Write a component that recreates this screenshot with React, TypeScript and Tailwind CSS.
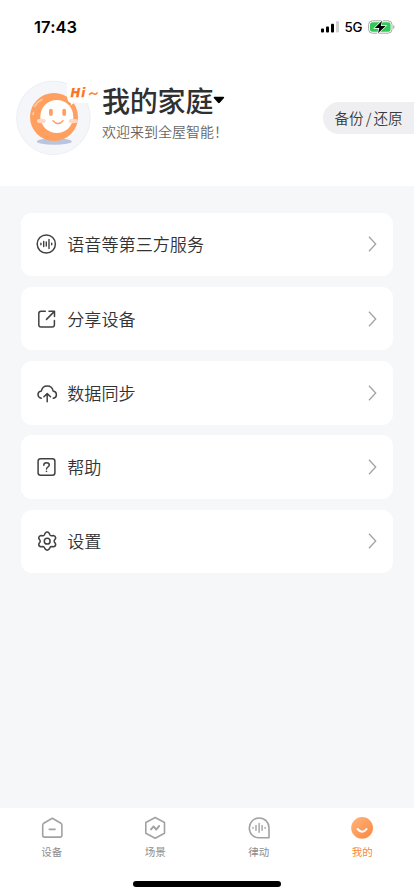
import type { ReactNode } from "react";

function Avatar() {
  return (
    <svg width="84" height="76" viewBox="16 80 84 76" className="shrink-0">
      <circle cx="53.4" cy="117.8" r="36.8" fill="#f4f6fa" stroke="#e9edf4" strokeWidth="0.9" />
      <ellipse cx="54.3" cy="141.5" rx="17.5" ry="3.2" fill="#b9c4de" />
      <circle cx="54" cy="117" r="24" fill="#ffa060" />
      <path d="M67 80H100V103H74L69.5 106.2L70 102.5Q67 101.5 67 95Z" fill="#fff" />
      <path d="M68 102.6L71.2 103.4L70.2 106.2" fill="#ff9147" />
      <circle cx="56.8" cy="116.5" r="16.5" fill="#fff" />
      <ellipse cx="41.3" cy="121" rx="4.5" ry="2.2" fill="#ffd9c4" />
      <ellipse cx="73.3" cy="121" rx="4.5" ry="2.2" fill="#ffd9c4" />
      <rect x="49" y="108.7" width="3.8" height="7.3" rx="1.9" fill="#ff9f68" />
      <rect x="62.3" y="108.7" width="3.8" height="7.3" rx="1.9" fill="#ff9f68" />
      <path d="M53 120.8Q58.2 126.4 63 120.8" fill="none" stroke="#ff9f68" strokeWidth="1.5" strokeLinecap="round" />
      <path d="M34.8 106.2Q37 102 42 99.5" fill="none" stroke="#ffc79f" strokeWidth="1.8" strokeLinecap="round" />
      <path d="M33 114.5L33.5 112.5" stroke="#ffc79f" strokeWidth="1.6" strokeLinecap="round" />
      <text x="70.6" y="97" fontSize="11.8" fontWeight="700" fontStyle="italic" letterSpacing="0.7" fontFamily="DejaVu Sans, sans-serif" fill="#fb731a" stroke="#fb731a" strokeWidth="0.25">Hi</text>
      <path d="M89.5 94.5Q91.3 92.1 93.4 93.7Q95.4 95.1 97 93" fill="none" stroke="#f98537" strokeWidth="1.6" strokeLinecap="round" />
    </svg>
  );
}

function Status() {
  return (
    <header className="flex h-[54px] items-center justify-between pl-[34px] pr-[19px] text-black">
      <span className="font-[Inter,sans-serif] text-[16.5px] font-semibold tracking-[0.1px]">17:43</span>
      <div className="flex items-center">
        <svg width="19" height="14" viewBox="0 0 19 14">
          <rect x="0" y="8.6" width="3" height="3.8" rx="0.9" />
          <rect x="5" y="6.4" width="3" height="6" rx="0.9" />
          <rect x="10" y="3.8" width="3" height="8.6" rx="0.9" />
          <rect x="15" y="1" width="3" height="11.4" rx="0.9" fill="#d1d1d1" />
        </svg>
        <span className="ml-[5px] w-[18.5px] font-[Inter,sans-serif] text-[13.3px] font-medium leading-[16px] tracking-[-0.1px]">5G</span>
        <svg className="ml-[5px]" width="27" height="14" viewBox="0 0 27 14">
          <rect x="0.6" y="0.8" width="23.4" height="12.4" rx="3.8" fill="#fff" stroke="#a8a8a8" />
          <rect x="2" y="2.2" width="20.6" height="9.6" rx="2.5" fill="#35c759" />
          <path d="M25.2 5V9Q26.5 8.4 26.5 7T25.2 5Z" fill="#a8a8a8" />
          <path d="M14 0.8L6.8 8H11.3L10 13.2L17.6 5.9H12.8Z" fill="#000" stroke="#fff" strokeWidth="1.4" paintOrder="stroke" />
        </svg>
      </div>
    </header>
  );
}

function LineIcon({ children }: { children: ReactNode }) {
  return (
    <svg width="22" height="22" viewBox="0 0 22 22" fill="none" stroke="#414141" strokeWidth="1.5" strokeLinecap="round" strokeLinejoin="round">
      {children}
    </svg>
  );
}

const rows: { label: string; icon: ReactNode }[] = [
  {
    label: "语音等第三方服务",
    icon: (
      <LineIcon>
        <circle cx="10.3" cy="11" r="9.1" />
        <path d="M4.9 10.3V11.7M7.7 8.5V13.5M10.3 9V13M13 6.5V15.5M15.7 10.3V11.7" strokeWidth="1.4" />
      </LineIcon>
    ),
  },
  {
    label: "分享设备",
    icon: (
      <LineIcon>
        <path d="M9.3 3.3H5.1Q2.8 3.3 2.8 5.6V16.8Q2.8 19.1 5.1 19.1H16.1Q18.4 19.1 18.4 16.8V12.5M13 3.3H18.5V8.4M18.2 3.6L10.5 11.4" />
      </LineIcon>
    ),
  },
  {
    label: "数据同步",
    icon: (
      <LineIcon>
        <path d="M5.2 16.3C.7 15 1.1 9.6 5.4 9C6.5 2.2 16 2.2 17.1 9C21.3 9.7 21.7 15.2 17.3 16.3M11.2 19.8V11.9M7.9 14.8L11.2 11.6L14.5 14.8" />
      </LineIcon>
    ),
  },
  {
    label: "帮助",
    icon: (
      <LineIcon>
        <rect x="2.1" y="2.8" width="16.8" height="16.4" rx="2.5" />
        <path d="M7.8 9.2C7.8 6 13.3 6.1 13.3 9.1C13.3 10.9 10.5 11.1 10.5 13M10.5 15.3V15.4" />
      </LineIcon>
    ),
  },
  {
    label: "设置",
    icon: (
      <LineIcon>
        <path d="M9.2 3.2Q11.2 1 13.2 3.2L14.1 5.1Q14.8 6 16 5.8L17.7 5.6Q20 6.3 19.6 8.5L18.3 10.4Q17.9 11.2 18.4 12L19.6 13.8Q20 16 17.7 16.8L15.6 16.5Q14.6 16.5 14.1 17.4L13.2 19.1Q11.2 21.2 9.2 19.1L8.3 17.4Q7.7 16.5 6.7 16.5L4.7 16.8Q2.4 16 2.8 13.8L4 12Q4.5 11.2 4 10.4L2.8 8.5Q2.4 6.3 4.7 5.6L6.7 5.8Q7.7 5.9 8.2 5.1Z" />
        <circle cx="11.2" cy="11.2" r="2.9" />
      </LineIcon>
    ),
  },
];

function TabIcon({ children }: { children: ReactNode }) {
  return (
    <svg width="24" height="24" viewBox="0 0 24 24" fill="none" stroke="#a2a2a2" strokeWidth="1.6" strokeLinecap="round" strokeLinejoin="round">
      {children}
    </svg>
  );
}

const tabs: { label: string; active?: boolean; icon: ReactNode }[] = [
  {
    label: "设备",
    icon: (
      <TabIcon>
        <path d="M12.3 2.2L20.9 7.3Q21.9 8 21.9 9.2V19.3Q21.9 21.1 20.1 21.1H4.5Q2.7 21.1 2.7 19.3V9.2Q2.7 8 3.7 7.3ZM9.3 13.4H15" />
      </TabIcon>
    ),
  },
  {
    label: "场景",
    icon: (
      <TabIcon>
        <path d="M12.2 1.5L21.5 6.5V17.2L12.2 22.3L2.8 17.2V6.5Z" />
        <path d="M8 13.4L10.6 10.4L13.2 13.6L16.2 9.9" strokeWidth="1.9" />
      </TabIcon>
    ),
  },
  {
    label: "律动",
    icon: (
      <TabIcon>
        <path d="M12.2 2C18 2 22 6.4 22 12V21.8H12.2C6.5 21.8 2.3 17.5 2.3 12S6.5 2 12.2 2Z" />
        <path d="M6 11.5V12.3M9 9.5V14.3M12.1 7.4V16.3M15.1 9.5V14.3M18.1 11.5V12.3" strokeWidth="1.4" />
      </TabIcon>
    ),
  },
  {
    label: "我的",
    active: true,
    icon: (
      <svg width="24" height="24" viewBox="0 0 24 24">
        <defs>
          <linearGradient id="me" x1="0.1" y1="0.1" x2="0.8" y2="0.9">
            <stop offset="0" stopColor="#ffb177" />
            <stop offset="1" stopColor="#fb8d48" />
          </linearGradient>
        </defs>
        <circle cx="12.1" cy="11.9" r="10.9" fill="url(#me)" />
        <path d="M7.6 13Q12.2 18.6 16.6 13" fill="none" stroke="#fff" strokeWidth="2" strokeLinecap="round" />
      </svg>
    ),
  },
];

export default function App() {
  return (
    <div className="flex h-[896px] w-[414px] flex-col overflow-hidden bg-[#f5f7f9] font-['Noto_Sans_CJK_SC',sans-serif]">
      <div className="h-[186px] shrink-0 bg-white">
        <Status />
        <section className="flex pt-[26px]">
          <div className="ml-4">
            <Avatar />
          </div>
          <div className="ml-[2px] pt-[2px]">
            <h1 className="flex items-center text-[28px] font-medium leading-[36px] tracking-[-0.2px] text-[#303030]">
              我的家庭
              <svg width="12" height="8" viewBox="0 0 12 8">
                <path d="M1.4 0.8H10.4Q12 1 10.8 2.3L6.8 6.7Q5.9 7.6 5 6.7L1 2.3Q0 1 1.4 0.8Z" fill="#000" />
              </svg>
            </h1>
            <p className="mt-[3px] text-[14px] leading-[20px] font-[350] text-[#666]">欢迎来到全屋智能！</p>
          </div>
          <button className="ml-auto mt-[22px] flex h-8 w-[91px] items-center rounded-l-full bg-[#efeff1] pl-[11.5px] text-[14.6px] font-[350] text-[#3b3b3b]">
            备份<span className="mx-[2px]">/</span>还原
          </button>
        </section>
      </div>
      <main className="flex flex-1 flex-col gap-[10.8px] px-[21.4px] pt-[26.5px]">
        {rows.map((r) => (
          <button key={r.label} className="flex h-[63.5px] items-center rounded-[11px] bg-white pl-[14.6px] pr-[16px] text-left">
            {r.icon}
            <span className="ml-[9.3px] flex-1 text-[17.1px] leading-[24px] font-[350] text-[#333]">{r.label}</span>
            <svg width="9" height="16" viewBox="0 0 9 16" fill="none" stroke="#a3a3a3" strokeWidth="1.3">
              <path d="M1 0.8L7.7 8L1 15.2" />
            </svg>
          </button>
        ))}
      </main>
      <footer className="flex h-[88.5px] shrink-0 flex-col items-center bg-white">
        <nav className="grid w-full grid-cols-4 pt-[8px]">
          {tabs.map((t) => (
            <div key={t.label} className="flex flex-col items-center">
              {t.icon}
              <span className={t.active ? "mt-[4px] text-[10.5px] leading-[16px] text-[#fa883a]" : "mt-[4px] text-[10.5px] leading-[16px] text-[#8e8e8e]"}>{t.label}</span>
            </div>
          ))}
        </nav>
        <div className="mt-[21.5px] h-[5.5px] w-[148px] rounded-full bg-black" />
      </footer>
    </div>
  );
}
